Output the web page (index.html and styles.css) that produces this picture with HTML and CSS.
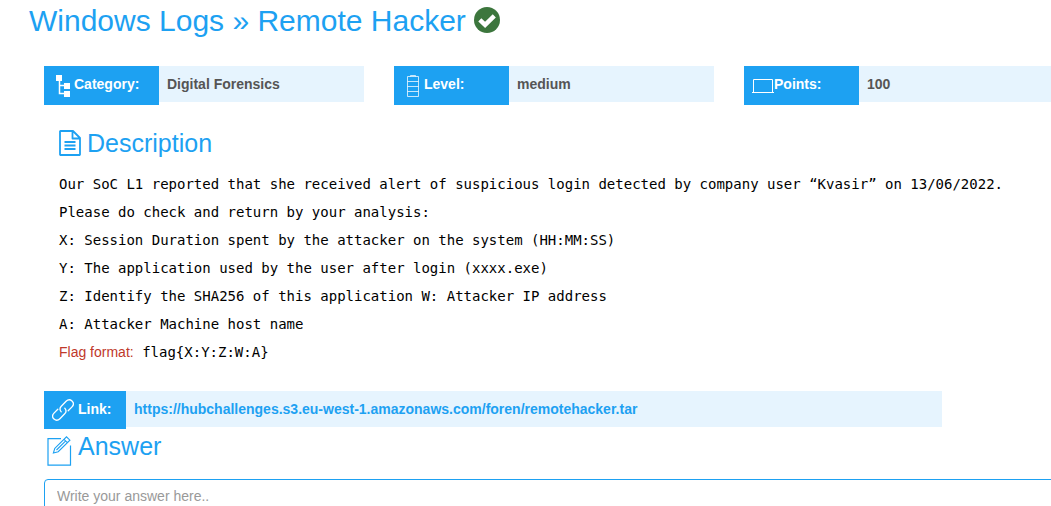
FILE: index.html
```html
<!DOCTYPE html>
<html lang="en">
<head>
<meta charset="utf-8">
<title>Windows Logs » Remote Hacker</title>
<link rel="stylesheet" href="styles.css">
</head>
<body>
<main class="page">
  <h1 class="title">Windows Logs » Remote Hacker
    <svg class="check" viewBox="0 0 26 26" aria-label="Solved"><circle cx="13" cy="13" r="13" fill="#3c763d"/><path d="M5.800 12.800l5.300 5.100 9.200-9" fill="none" stroke="#fff" stroke-width="4.400"/></svg>
  </h1>
  <div class="content">
    <dl class="facts">
      <div class="fact">
        <dt class="label"><svg class="icon" viewBox="0 0 22 22" fill="#fff"><path d="M4 0h6v6H4zM12 8h6v6h-6zM12 16h6v6h-6z"/><path d="M7.500 6v12.500H12M7.500 10.500H12" fill="none" stroke="#fff" stroke-width="1.500"/></svg>Category:</dt>
        <dd class="value">Digital Forensics</dd>
      </div>
      <div class="fact">
        <dt class="label"><svg class="icon" viewBox="0 0 22 22" fill="none" stroke="#fff" stroke-width=".75"><path d="M5.500 1.500h11v20h-11zM5.500 6.500h11M5.500 11.500h11M5.500 16.500h11M8.500 1.500v-1h5v1"/></svg>Level:</dt>
        <dd class="value">medium</dd>
      </div>
      <div class="fact">
        <dt class="label"><svg class="icon" viewBox="0 0 22 22" fill="none" stroke="#fff"><path d="M1.500 17V4.500h19V17M0 17.500h22"/></svg>Points:</dt>
        <dd class="value">100</dd>
      </div>
    </dl>
    <section class="description">
      <h2 class="heading"><svg class="doc" viewBox="0 0 22 26" fill="none" stroke="#1da1f2" stroke-width="1.800" stroke-linejoin="round"><path d="M1.500 1H14l7 7v16.500l-.5.500h-19L1 24.500v-23zM13.500 1v7.500H21M5.500 12h11M5.500 15.500h11M5.500 19h11"/></svg>Description</h2>
      <p class="line">Our SoC L1 reported that she received alert of suspicious login detected by company user “Kvasir” on 13/06/2022.</p>
      <p class="line">Please do check and return by your analysis:</p>
      <p class="line">X: Session Duration spent by the attacker on the system (HH:MM:SS)</p>
      <p class="line">Y: The application used by the user after login (xxxx.exe)</p>
      <p class="line">Z: Identify the SHA256 of this application W: Attacker IP address</p>
      <p class="line">A: Attacker Machine host name</p>
      <p class="line"><span class="flag">Flag format:</span> flag{X:Y:Z:W:A}</p>
    </section>
    <div class="link-row">
      <span class="label link-label"><svg class="icon link-icon" viewBox="0 0 22 22" fill="none" stroke="#fff" stroke-width="1.300" stroke-linecap="round"><path d="M9.200 12.800c-1.600-1.900-1.500-4 .1-5.600l4.800-4.900c1.800-1.800 4.200-1.900 5.900-.3 1.800 1.700 1.700 4.100 0 5.900l-3.800 3.900"/><path d="M12.800 9.200c1.600 1.900 1.500 4-.1 5.600l-4.800 4.900c-1.800 1.800-4.200 1.900-5.900.3-1.800-1.700-1.700-4.100 0-5.900l3.800-3.900"/></svg>Link:</span>
      <div class="value"><a class="link" href="https://hubchallenges.s3.eu-west-1.amazonaws.com/foren/remotehacker.tar">https://hubchallenges.s3.eu-west-1.amazonaws.com/foren/remotehacker.tar</a></div>
    </div>
    <form class="answer">
      <h2 class="answer-heading"><svg class="pen" viewBox="0 0 30 30" fill="none" stroke="#1da1f2" stroke-width="1.200"><path d="M17 2.600H4v26.500h22.500V9.500"/><path d="M10.800 12.300L22.500.8l3.400 3.400-11.700 11.500-4.800 1.300zM20 3.300l3.400 3.400M12.500 14l9.200-9.100" stroke-width="1.100"/></svg><label for="answer">Answer</label></h2>
      <input class="field" id="answer" type="text" placeholder="Write your answer here..">
    </form>
  </div>
</main>
</body>
</html>
```
FILE: styles.css
```css
* { box-sizing: border-box; }
body {
  margin: 0;
  overflow: hidden;
  background: #fff;
  font: 14px/20px "Liberation Sans", Arial, sans-serif;
}
.title {
  display: flex;
  align-items: flex-start;
  gap: 8px;
  margin: 0 0 24px 29px;
  color: #1da1f2;
  font-size: 30px;
  font-weight: 400;
  line-height: 42px;
}
.check { width: 26px; height: 26px; margin-top: 7px; }
.content { margin: 0 -13px 0 44px; }
.facts {
  display: grid;
  grid-template-columns: repeat(3, 1fr);
  gap: 30px;
  margin: 0;
}
.fact, .link-row { display: flex; align-items: flex-start; }
.label {
  display: flex;
  align-items: flex-start;
  flex: 0 0 115px;
  height: 39px;
  padding: 8px;
  background: #1da1f2;
  color: #fff;
  font-weight: 700;
}
.icon { width: 22px; height: 22px; margin-top: 1px; }
.link-icon { margin-top: 0; }
.value {
  flex: 1;
  margin: 0;
  padding: 8px;
  background: #e6f4fe;
  color: #555;
  font-weight: 700;
}
.description { padding: 25px 15px 0; }
.heading {
  display: flex;
  align-items: flex-start;
  gap: 6px;
  margin: 0 0 13px;
  color: #1da1f2;
  font-size: 25px;
  font-weight: 400;
  line-height: 27px;
}
.doc { width: 22px; height: 26px; }
.line {
  margin: 0;
  color: #000;
  font: 14px/28px "DejaVu Sans Mono", monospace;
}
.flag { color: #c0392b; font-family: "Liberation Sans", Arial, sans-serif; }
.link-row { width: 88%; margin-top: 25px; }
.link-label { flex-basis: 82px; height: 38px; gap: 4px; }
.link { color: #1da1f2; text-decoration: none; }
.answer-heading {
  display: flex;
  align-items: flex-start;
  gap: 4px;
  margin: 0 0 13px;
  color: #1da1f2;
  font-size: 25px;
  font-weight: 400;
  line-height: 34px;
}
.pen { width: 30px; height: 30px; margin-top: 7px; }
.field {
  display: block;
  width: 100%;
  height: 34px;
  padding: 6px 12px;
  border: 1px solid #1da1f2;
  border-radius: 4px;
  font: inherit;
}
.field::placeholder { color: #999; opacity: 1; }
```
